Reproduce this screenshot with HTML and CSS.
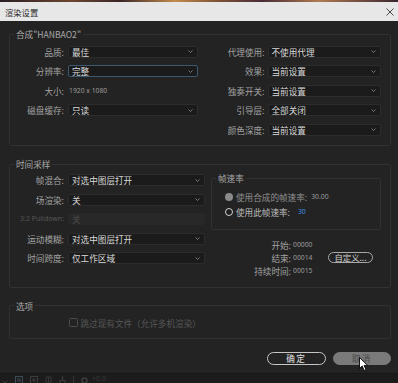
FILE: index.html
```html
<!DOCTYPE html>
<html lang="zh-CN">
<head>
<meta charset="utf-8">
<title>渲染设置</title>
<link rel="stylesheet" href="styles.css">
</head>
<body>
<div class="window">
  <div class="backdrop-strip"></div>
  <header class="titlebar">
    <span class="title">渲染设置</span>
    <svg class="close" width="8" height="8" viewBox="0 0 8 8"><path d="M0.5 0.5L7.5 7.5M7.5 0.5L0.5 7.5" stroke="#3a3a3a" stroke-width="0.9" fill="none"/></svg>
  </header>

  <main class="dialog">
    <fieldset class="group group-comp">
      <legend>合成"HANBAO2"</legend>
      <div class="cols">
        <div class="form form-left">
          <span class="lbl">品质:</span>
          <div class="select"><span>最佳</span><svg class="chev" width="5" height="3" viewBox="0 0 5 3"><path d="M0.5 0.5L2.5 2.5L4.5 0.5" stroke="#8e8e8e" stroke-width="0.8" fill="none"/></svg></div>
          <span class="lbl">分辨率:</span>
          <div class="select focused"><span>完整</span><svg class="chev" width="5" height="3" viewBox="0 0 5 3"><path d="M0.5 0.5L2.5 2.5L4.5 0.5" stroke="#8e8e8e" stroke-width="0.8" fill="none"/></svg></div>
          <span class="lbl">大小:</span>
          <span class="plain">1920 x 1080</span>
          <span class="lbl">磁盘缓存:</span>
          <div class="select"><span>只读</span><svg class="chev" width="5" height="3" viewBox="0 0 5 3"><path d="M0.5 0.5L2.5 2.5L4.5 0.5" stroke="#8e8e8e" stroke-width="0.8" fill="none"/></svg></div>
        </div>
        <div class="form form-right">
          <span class="lbl">代理使用:</span>
          <div class="select"><span>不使用代理</span><svg class="chev" width="5" height="3" viewBox="0 0 5 3"><path d="M0.5 0.5L2.5 2.5L4.5 0.5" stroke="#8e8e8e" stroke-width="0.8" fill="none"/></svg></div>
          <span class="lbl">效果:</span>
          <div class="select"><span>当前设置</span><svg class="chev" width="5" height="3" viewBox="0 0 5 3"><path d="M0.5 0.5L2.5 2.5L4.5 0.5" stroke="#8e8e8e" stroke-width="0.8" fill="none"/></svg></div>
          <span class="lbl">独奏开关:</span>
          <div class="select"><span>当前设置</span><svg class="chev" width="5" height="3" viewBox="0 0 5 3"><path d="M0.5 0.5L2.5 2.5L4.5 0.5" stroke="#8e8e8e" stroke-width="0.8" fill="none"/></svg></div>
          <span class="lbl">引导层:</span>
          <div class="select"><span>全部关闭</span><svg class="chev" width="5" height="3" viewBox="0 0 5 3"><path d="M0.5 0.5L2.5 2.5L4.5 0.5" stroke="#8e8e8e" stroke-width="0.8" fill="none"/></svg></div>
          <span class="lbl">颜色深度:</span>
          <div class="select"><span>当前设置</span><svg class="chev" width="5" height="3" viewBox="0 0 5 3"><path d="M0.5 0.5L2.5 2.5L4.5 0.5" stroke="#8e8e8e" stroke-width="0.8" fill="none"/></svg></div>
        </div>
      </div>
    </fieldset>

    <fieldset class="group group-time">
      <legend>时间采样</legend>
      <div class="cols">
        <div class="form form-time">
          <span class="lbl">帧混合:</span>
          <div class="select"><span>对选中图层打开</span><svg class="chev" width="5" height="3" viewBox="0 0 5 3"><path d="M0.5 0.5L2.5 2.5L4.5 0.5" stroke="#8e8e8e" stroke-width="0.8" fill="none"/></svg></div>
          <span class="lbl">场渲染:</span>
          <div class="select"><span>关</span><svg class="chev" width="5" height="3" viewBox="0 0 5 3"><path d="M0.5 0.5L2.5 2.5L4.5 0.5" stroke="#8e8e8e" stroke-width="0.8" fill="none"/></svg></div>
          <span class="lbl lbl-latin disabled">3:2 Pulldown:</span>
          <div class="select disabled"><span>关</span></div>
          <span class="lbl">运动模糊:</span>
          <div class="select"><span>对选中图层打开</span><svg class="chev" width="5" height="3" viewBox="0 0 5 3"><path d="M0.5 0.5L2.5 2.5L4.5 0.5" stroke="#8e8e8e" stroke-width="0.8" fill="none"/></svg></div>
          <span class="lbl">时间跨度:</span>
          <div class="select"><span>仅工作区域</span><svg class="chev" width="5" height="3" viewBox="0 0 5 3"><path d="M0.5 0.5L2.5 2.5L4.5 0.5" stroke="#8e8e8e" stroke-width="0.8" fill="none"/></svg></div>
        </div>

        <div class="rate-col">
          <fieldset class="group group-rate">
            <legend>帧速率</legend>
            <div class="radio-row">
              <span class="radio radio-filled"></span>
              <span class="radio-text dim">使用合成的帧速率:</span>
              <span class="num">30.00</span>
            </div>
            <div class="radio-row">
              <span class="radio radio-ring"></span>
              <span class="radio-text">使用此帧速率:</span>
              <span class="num num-blue">30</span>
            </div>
          </fieldset>
          <div class="span-grid">
            <span class="lbl">开始:</span><span class="num">00000</span><span></span>
            <span class="lbl">结束:</span><span class="num">00014</span><button class="pill small">自定义...</button>
            <span class="lbl">持续时间:</span><span class="num">00015</span><span></span>
          </div>
        </div>
      </div>
    </fieldset>

    <fieldset class="group group-opts">
      <legend>选项</legend>
      <div class="check-row">
        <span class="checkbox"></span>
        <span class="check-text">跳过现有文件（允许多机渲染）</span>
      </div>
    </fieldset>

    <div class="actions">
      <button class="pill ok">确定</button>
      <button class="pill cancel">取消</button>
    </div>
  </main>

  <footer class="appbar">
    <svg width="6" height="4" viewBox="0 0 6 4"><path d="M0.5 0.5L3 3L5.5 0.5" stroke="#3c3c3c" fill="none"/></svg>
    <svg class="ico ico-active" width="8" height="8" viewBox="0 0 8 8"><rect x="0.5" y="0.5" width="7" height="7" stroke="#3d4a58" fill="none"/><path d="M2 3H6M2 5H6" stroke="#3d4a58"/></svg>
    <svg class="ico" width="8" height="8" viewBox="0 0 8 8"><rect x="0.5" y="0.5" width="7" height="7" stroke="#3c3c3c" fill="none"/><path d="M4 2V6M2 4H6" stroke="#3c3c3c"/></svg>
    <svg class="ico" width="7" height="8" viewBox="0 0 7 8"><path d="M1 1H6V7H1Z" stroke="#363636" fill="none"/><path d="M3.5 1V7" stroke="#363636"/></svg>
    <svg class="ico" width="7" height="8" viewBox="0 0 7 8"><path d="M3.5 0.5V3M1 7V4.5H6V7M3.5 3V4.5" stroke="#3c3c3c" fill="none"/><circle cx="3.5" cy="1.5" r="1" fill="#3c3c3c"/></svg>
    <span class="sep"></span>
    <svg class="ico" width="7" height="7" viewBox="0 0 7 7"><circle cx="3.5" cy="3.5" r="2.5" stroke="#3c3c3c" stroke-width="1.5" fill="none"/></svg>
    <span class="appbar-num">+0.0</span>
  </footer>

  <svg class="cursor" width="10" height="15" viewBox="0 0 10 15"><path d="M0.5 0.5V11.5L3.2 9L5.2 13.5L7 12.7L5.1 8.4H8.6Z" fill="#ffffff" stroke="#000000" stroke-width="0.9" stroke-linejoin="round"/></svg>
</div>
</body>
</html>
```

FILE: styles.css
```css
* { box-sizing: border-box; }

html, body {
  margin: 0;
  padding: 0;
  background: #232323;
}

body {
  font-family: "Noto Sans CJK SC", "Noto Sans", sans-serif;
  font-size: 8.6px;
  color: #a2a2a2;
}

.window {
  position: relative;
  width: 398px;
  height: 383px;
  display: flex;
  flex-direction: column;
  overflow: hidden;
  background: #232323;
}

.backdrop-strip {
  height: 2px;
  flex: none;
  background: linear-gradient(90deg, #2a1f24 0%, #6b4630 18%, #3a2628 30%, #c48a4a 44%, #7a5036 55%, #4a2c36 66%, #b07a52 80%, #3a2630 100%);
}

.titlebar {
  height: 19px;
  flex: none;
  background: #e7e7e7;
  display: flex;
  align-items: center;
  justify-content: space-between;
  padding: 0 4px 0 5px;
}

.title {
  font-size: 8.3px;
  color: #2a2a2a;
  line-height: 10px;
}

.close { display: block; }

.dialog {
  flex: 1;
  display: flex;
  flex-direction: column;
  padding: 8px 7px 0 9px;
}

.group {
  margin: 0;
  padding: 0;
  border: 1px solid #313131;
  border-radius: 2px;
  min-width: 0;
}

.group legend {
  margin-left: 4px;
  padding: 0 2px;
  font-size: 8.6px;
  line-height: 10px;
  color: #a8a8a8;
}

.cols {
  display: flex;
  align-items: flex-start;
}

.form {
  display: grid;
  grid-auto-rows: 12px;
  row-gap: 7.5px;
  align-items: center;
}

.form-left {
  grid-template-columns: 54px 130px;
  column-gap: 4px;
}

.form-right {
  grid-template-columns: auto 113.5px;
  column-gap: 3px;
  margin-left: auto;
  margin-right: 9px;
}

.form-time {
  grid-template-columns: 54px 137px;
  column-gap: 4px;
}

.group-comp .cols { padding: 6.5px 0 9px; }

.group-time { margin-top: 13.5px; }
.group-time > .cols { padding: 5px 0 9.5px; }

.lbl {
  text-align: right;
  white-space: nowrap;
  line-height: 12px;
  color: #a2a2a2;
}

.lbl-latin {
  font-family: "Noto Sans", sans-serif;
  font-size: 7px;
}

.lbl.disabled { color: #555555; }

.select {
  height: 12px;
  display: flex;
  align-items: center;
  justify-content: space-between;
  padding: 0 4px 0 3px;
  background: #1b1b1b;
  border: 1px solid #2c2c2c;
  border-radius: 2px;
  color: #d9d9d9;
  line-height: 10px;
  white-space: nowrap;
}

.select.focused {
  border-color: #3b586f;
}

.select.disabled {
  background: #282828;
  border-color: #282828;
  color: #4a4a4a;
}

.chev { display: block; flex: none; }

.plain {
  font-family: "Noto Sans", sans-serif;
  font-size: 6.8px;
  color: #9c9c9c;
  padding-left: 1px;
}

.rate-col {
  margin-left: 6px;
  width: 170px;
  margin-top: -1px;
}

.group-rate {
  padding: 8px 0 11.5px;
}

.group-rate legend { margin-left: 4px; }

.radio-row {
  display: flex;
  align-items: center;
  height: 11px;
  padding-left: 12.5px;
}

.radio-row + .radio-row { margin-top: 4px; }

.radio {
  width: 8px;
  height: 8px;
  border-radius: 50%;
  flex: none;
}

.radio-filled { background: #8a8a8a; }

.radio-ring {
  border: 1.4px solid #d2d2d2;
  background: #1e1e1e;
}

.radio-text {
  margin-left: 3.5px;
  color: #bdbdbd;
  white-space: nowrap;
}

.radio-text.dim { color: #909090; }

.num {
  font-family: "Noto Sans", sans-serif;
  font-size: 6.8px;
  color: #9a9a9a;
  margin-left: 4px;
}

.num-blue {
  color: #3f8ce0;
  margin-left: 8px;
}

.span-grid {
  display: grid;
  grid-template-columns: 80px auto auto;
  grid-auto-rows: 13px;
  align-items: center;
  margin-top: 8.5px;
}

.span-grid .num { margin-left: 2px; }

.pill {
  font-family: "Noto Sans CJK SC", "Noto Sans", sans-serif;
  border-radius: 7px;
  padding: 0;
  cursor: default;
}

.pill.small {
  width: 45px;
  height: 11px;
  margin-left: 7.5px;
  font-size: 8.4px;
  line-height: 9px;
  border: 1px solid #a8a8a8;
  background: transparent;
  color: #cfcfcf;
  text-align: center;
}

.group-opts { margin-top: 13px; }

.check-row {
  display: flex;
  align-items: center;
  height: 12px;
  margin: 6px 0 9px;
  padding-left: 59px;
}

.checkbox {
  width: 8.5px;
  height: 8.5px;
  border: 1px solid #4b4b4b;
  border-radius: 1.5px;
  flex: none;
}

.check-text {
  margin-left: 3px;
  color: #565656;
  white-space: nowrap;
}

.actions {
  display: flex;
  justify-content: flex-end;
  gap: 7px;
  margin-top: 13px;
}

.ok, .cancel {
  width: 58.5px;
  height: 13px;
  font-size: 8.6px;
  line-height: 11px;
  letter-spacing: 1.5px;
  text-align: center;
}

.ok {
  background: #232323;
  border: 1px solid #c6c6c6;
  color: #e2e2e2;
}

.cancel {
  background: #7a7a7a;
  border: 1px solid #7a7a7a;
  color: #4a4a4a;
}

.appbar {
  height: 10px;
  flex: none;
  background: #1c1c1c;
  border-top: 1px solid #161616;
  display: flex;
  align-items: flex-end;
  gap: 7px;
  padding: 0 0 0 2px;
  overflow: hidden;
}

.appbar svg { display: block; flex: none; margin-bottom: -1px; }

.sep {
  width: 1px;
  height: 8px;
  background: #333;
  margin-bottom: -1px;
}

.appbar-num {
  font-family: "Noto Sans", sans-serif;
  font-size: 7px;
  line-height: 8px;
  color: #3a3a3a;
  margin-left: -3px;
}

.cursor {
  position: absolute;
  left: 359px;
  top: 357px;
}
```
